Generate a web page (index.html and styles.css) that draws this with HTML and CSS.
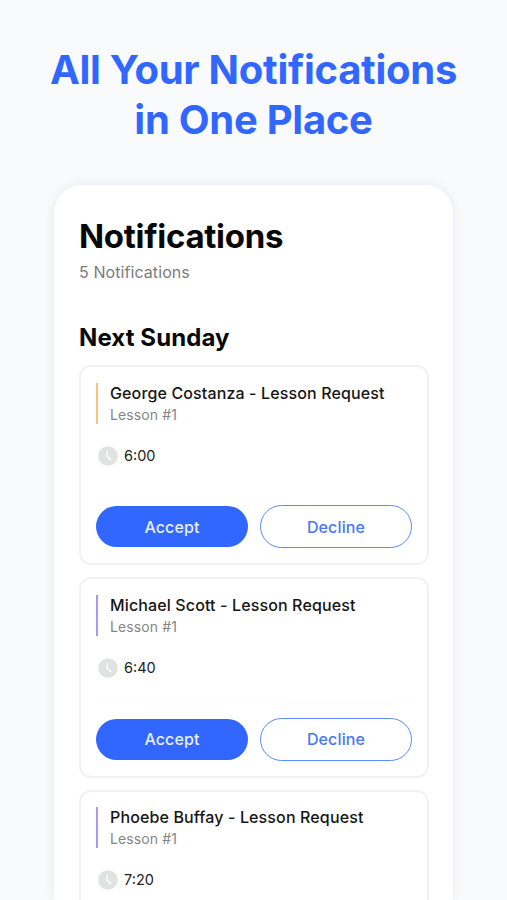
FILE: index.html
```html
<!DOCTYPE html>
<html lang="en">
<head>
<meta charset="utf-8">
<title>Notifications</title>
<link rel="stylesheet" href="styles.css">
</head>
<body>
<h1 class="headline">All Your Notifications<br>in One Place</h1>
<main class="panel">
  <h2 class="title">Notifications</h2>
  <p class="count">5 Notifications</p>
  <h3 class="day">Next Sunday</h3>
  <section class="list">
    <article class="card">
      <div class="lesson lesson-orange"><h4 class="name">George Costanza - Lesson Request</h4><p class="number">Lesson #1</p></div>
      <div class="time"><svg class="clock" viewBox="0 0 20 20"><circle cx="10" cy="10" r="9.8" fill="#e1e3e3"/><path d="M9.3 5.5v5l4 3.5" fill="none" stroke="#fff" stroke-width="1.5"/></svg><span>6:00</span></div>
      <div class="actions"><button class="btn accept">Accept</button><button class="btn decline">Decline</button></div>
    </article>
    <article class="card">
      <div class="lesson"><h4 class="name">Michael Scott - Lesson Request</h4><p class="number">Lesson #1</p></div>
      <div class="time"><svg class="clock" viewBox="0 0 20 20"><circle cx="10" cy="10" r="9.8" fill="#e1e3e3"/><path d="M9.3 5.5v5l4 3.5" fill="none" stroke="#fff" stroke-width="1.5"/></svg><span>6:40</span></div>
      <div class="actions ruled"><button class="btn accept">Accept</button><button class="btn decline">Decline</button></div>
    </article>
    <article class="card card-last">
      <div class="lesson"><h4 class="name">Phoebe Buffay - Lesson Request</h4><p class="number">Lesson #1</p></div>
      <div class="time"><svg class="clock" viewBox="0 0 20 20"><circle cx="10" cy="10" r="9.8" fill="#e1e3e3"/><path d="M9.3 5.5v5l4 3.5" fill="none" stroke="#fff" stroke-width="1.5"/></svg><span>7:20</span></div>
    </article>
  </section>
</main>
</body>
</html>
```
FILE: styles.css
```css
* { box-sizing: border-box; margin: 0; }
body { display: flex; flex-direction: column; height: 900px; overflow: hidden; padding-top: 45px; background: #f8fafc; color: #080808; font-family: Inter, sans-serif; }
.headline { color: #3167ff; font-size: 40px; line-height: 50px; font-weight: 700; letter-spacing: -.27px; text-align: center; }
.panel { flex: 1; width: 399px; min-height: 0; margin: 40px 0 0 54px; padding: 31px 25px 0; background: #fff; border-radius: 28px 28px 0 0; box-shadow: 0 0 12px rgba(30, 50, 80, .07); }
.title { font-size: 33px; line-height: 40px; font-weight: 700; letter-spacing: -.3px; }
.count { margin-top: 6px; color: #7c7c7c; font-size: 16px; line-height: 20px; letter-spacing: .08px; }
.day { margin-top: 41px; font-size: 24px; line-height: 30px; font-weight: 700; letter-spacing: .1px; }
.list { display: flex; flex-direction: column; gap: 12px; margin-top: 12px; }
.card { width: 350px; height: 200.4px; padding: 15.7px 15px 0; border: 2px solid #f2f2f3; border-radius: 12px; }
.card-last { height: 110px; border-bottom: 0; border-radius: 12px 12px 0 0; }
.lesson { height: 41px; padding-left: 12px; border-left: 2px solid #a99af5; }
.lesson-orange { border-color: #f9c477; }
.name { color: #151515; font-size: 16px; line-height: 20px; font-weight: 500; letter-spacing: .13px; white-space: nowrap; }
.number { margin-top: 2px; color: #858585; font-size: 14px; line-height: 20px; letter-spacing: .1px; }
.time { display: flex; align-items: center; gap: 6px; height: 20px; margin: 22px 0 0 2px; color: #222; font-size: 14.5px; line-height: 18px; }
.clock { width: 20px; height: 20px; }
.actions { display: flex; align-items: center; gap: 12px; width: 316px; height: 60px; margin-top: 22.8px; padding-top: 16px; border-top: 1px solid transparent; }
.ruled { border-top-color: #fafafa; }
.btn { width: 152px; height: 43px; padding: 0; border: 1px solid #5c8af7; border-radius: 22px; font: 500 16px Inter, sans-serif; letter-spacing: .12px; }
.accept { height: 41px; border: 0; background: #3167ff; color: #e8efff; }
.decline { background: #fff; color: #4777f6; }
```
